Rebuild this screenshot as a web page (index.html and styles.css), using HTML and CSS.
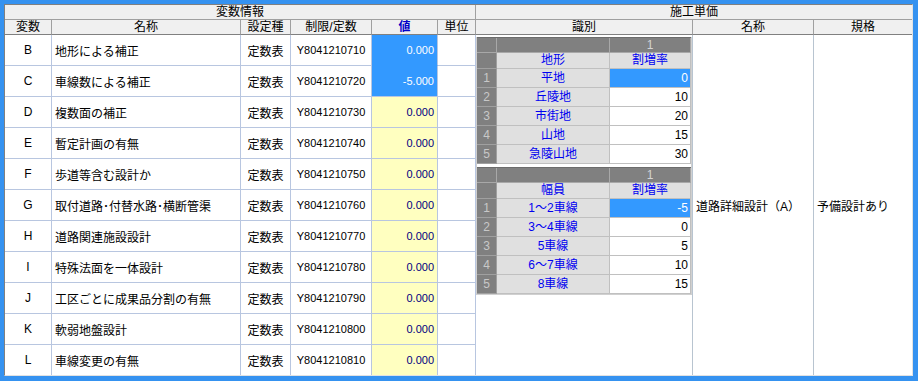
FILE: index.html
```html
<!DOCTYPE html>
<html lang="ja">
<head>
<meta charset="utf-8">
<title>変数情報</title>
<link rel="stylesheet" href="styles.css">
</head>
<body>
<div class="frame">
  <div class="panel">
    <div class="hd1 left">変数情報</div>
    <div class="hd1 right">施工単価</div>

    <div class="hd2">変数</div>
    <div class="hd2">名称</div>
    <div class="hd2">設定種</div>
    <div class="hd2">制限/定数</div>
    <div class="hd2 val-head">値</div>
    <div class="hd2">単位</div>
    <div class="hd2">識別</div>
    <div class="hd2">名称</div>
    <div class="hd2 last">規格</div>

    <div class="ident">
      <div class="iwrap">
        <div class="itab">
          <div class="ih"></div><div class="ih"></div><div class="ih">1</div>
          <div class="rn hrow"></div><div class="fh">地形</div><div class="fh vh">割増率</div>
          <div class="rn">1</div><div class="fd">平地</div><div class="vd sel">0</div>
          <div class="rn">2</div><div class="fd">丘陵地</div><div class="vd">10</div>
          <div class="rn">3</div><div class="fd">市街地</div><div class="vd">20</div>
          <div class="rn">4</div><div class="fd">山地</div><div class="vd">15</div>
          <div class="rn">5</div><div class="fd">急陵山地</div><div class="vd">30</div>
        </div>
        <div class="itab">
          <div class="ih"></div><div class="ih"></div><div class="ih">1</div>
          <div class="rn hrow"></div><div class="fh">幅員</div><div class="fh vh">割増率</div>
          <div class="rn">1</div><div class="fd">1～2車線</div><div class="vd sel">-5</div>
          <div class="rn">2</div><div class="fd">3～4車線</div><div class="vd">0</div>
          <div class="rn">3</div><div class="fd">5車線</div><div class="vd">5</div>
          <div class="rn">4</div><div class="fd">6～7車線</div><div class="vd">10</div>
          <div class="rn">5</div><div class="fd">8車線</div><div class="vd">15</div>
        </div>
      </div>
    </div>
    <div class="rname">道路詳細設計（A）</div>
    <div class="rspec">予備設計あり</div>

    <div class="c var">B</div><div class="c name">地形による補正</div><div class="c kind">定数表</div><div class="c code">Y8041210710</div><div class="c val sel top">0.000</div><div class="c unit"></div>
    <div class="c var">C</div><div class="c name">車線数による補正</div><div class="c kind">定数表</div><div class="c code">Y8041210720</div><div class="c val sel">-5.000</div><div class="c unit"></div>
    <div class="c var">D</div><div class="c name">複数面の補正</div><div class="c kind">定数表</div><div class="c code">Y8041210730</div><div class="c val yel">0.000</div><div class="c unit"></div>
    <div class="c var">E</div><div class="c name">暫定計画の有無</div><div class="c kind">定数表</div><div class="c code">Y8041210740</div><div class="c val yel">0.000</div><div class="c unit"></div>
    <div class="c var">F</div><div class="c name">歩道等含む設計か</div><div class="c kind">定数表</div><div class="c code">Y8041210750</div><div class="c val yel">0.000</div><div class="c unit"></div>
    <div class="c var">G</div><div class="c name">取付道路･付替水路･横断管渠</div><div class="c kind">定数表</div><div class="c code">Y8041210760</div><div class="c val yel">0.000</div><div class="c unit"></div>
    <div class="c var">H</div><div class="c name">道路関連施設設計</div><div class="c kind">定数表</div><div class="c code">Y8041210770</div><div class="c val yel">0.000</div><div class="c unit"></div>
    <div class="c var">I</div><div class="c name">特殊法面を一体設計</div><div class="c kind">定数表</div><div class="c code">Y8041210780</div><div class="c val yel">0.000</div><div class="c unit"></div>
    <div class="c var">J</div><div class="c name">工区ごとに成果品分割の有無</div><div class="c kind">定数表</div><div class="c code">Y8041210790</div><div class="c val yel">0.000</div><div class="c unit"></div>
    <div class="c var">K</div><div class="c name">軟弱地盤設計</div><div class="c kind">定数表</div><div class="c code">Y8041210800</div><div class="c val yel">0.000</div><div class="c unit"></div>
    <div class="c var end">L</div><div class="c name end">車線変更の有無</div><div class="c kind end">定数表</div><div class="c code end">Y8041210810</div><div class="c val yel end">0.000</div><div class="c unit end"></div>
  </div>
</div>
</body>
</html>
```

FILE: styles.css
```css
* {
  box-sizing: border-box;
}

html, body {
  margin: 0;
  padding: 0;
}

body {
  font-family: "Liberation Sans", "Noto Sans CJK JP", sans-serif;
  font-size: 12px;
  color: #000;
  background: #fff;
}

.frame {
  width: 918px;
  height: 381px;
  background: #3592f0;
  padding: 4px 5px 5px 4px;
}

.panel {
  width: 909px;
  height: 372px;
  border: 1px solid;
  border-color: #808080 #e2e2e2 #e2e2e2 #808080;
  background: #fff;
  display: grid;
  grid-template-columns: 47px 189px 50px 81px 66px 38px 217px 121px 98px;
  grid-template-rows: 15px 15px repeat(10, 31px) 30px;
}

/* header rows */
.hd1 {
  background: #f0f0f0;
  border-bottom: 1px solid #a0a0a0;
  text-align: center;
  line-height: 14px;
  white-space: nowrap;
}

.hd1.left {
  grid-column: 1 / 7;
  border-right: 1px solid #a0a0a0;
}

.hd1.right {
  grid-column: 7 / 10;
}

.hd2 {
  background: #f0f0f0;
  border-right: 1px solid #a0a0a0;
  border-bottom: 1px solid #808080;
  text-align: center;
  line-height: 14px;
  white-space: nowrap;
}

.hd2.last {
  border-right: none;
}

.val-head {
  color: #0000c8;
  font-weight: bold;
}

/* data cells */
.c {
  border-right: 1px solid #b8c6e0;
  border-bottom: 1px solid #b8c6e0;
  display: flex;
  align-items: center;
  white-space: nowrap;
  overflow: hidden;
}

.var {
  justify-content: center;
}

.name {
  padding-left: 3px;
}

.kind,
.code {
  justify-content: center;
}

.code {
  font-size: 11px;
}

.val {
  justify-content: flex-end;
  padding-right: 3px;
  font-size: 11px;
}

.val.sel {
  background: #3399ff;
  color: #fff;
}

.val.sel.top {
  border-bottom-color: #3399ff;
}

.val.yel {
  background: #ffffc0;
  color: #000080;
}

.end {
  border-bottom: none;
}

/* right section */
.ident {
  grid-column: 7;
  grid-row: 3 / 14;
  border-right: 1px solid #b8c4d0;
}

.rname {
  grid-column: 8;
  grid-row: 3 / 14;
  border-right: 1px solid #b8c4d0;
  display: flex;
  align-items: center;
  padding-left: 3px;
  white-space: nowrap;
}

.rspec {
  grid-column: 9;
  grid-row: 3 / 14;
  display: flex;
  align-items: center;
  padding-left: 3px;
  white-space: nowrap;
}

/* inner tables */
.iwrap {
  margin-top: 2px;
  border-left: 1px solid #d0d0d0;
  border-right: 1px solid #d0d0d0;
  border-bottom: 1px solid #d0d0d0;
}

.itab {
  display: grid;
  grid-template-columns: 20px 113px 81px;
  grid-template-rows: 15px 16px repeat(5, 19px);
  border-top: 1px solid #6c6c6c;
}

.itab + .itab {
  margin-top: 3px;
}

.ih {
  background: #808080;
  color: #d4d4d4;
  border-right: 1px solid #a8a8a8;
  border-bottom: 1px solid #a8a8a8;
  text-align: center;
  line-height: 14px;
}

.rn {
  background: #808080;
  color: #c8c8c8;
  border-right: 1px solid #a0a0a0;
  border-bottom: 1px solid #a0a0a0;
  text-align: center;
  line-height: 18px;
}

.rn.hrow {
  line-height: 15px;
}

.fh {
  background: #e0e0e0;
  color: #0000f0;
  border-right: 1px solid #c0c0c0;
  border-bottom: 1px solid #c0c0c0;
  text-align: center;
  line-height: 15px;
}

.fd {
  background: #e0e0e0;
  color: #0000f0;
  border-right: 1px solid #c0c0c0;
  border-bottom: 1px solid #c0c0c0;
  text-align: center;
  line-height: 18px;
  white-space: nowrap;
}

.vd {
  background: #fff;
  text-align: right;
  padding-right: 2px;
  border-right: 1px solid #c0c0c0;
  border-bottom: 1px solid #c0c0c0;
  line-height: 18px;
}

.vd.sel {
  background: #3399ff;
  color: #fff;
}
```
